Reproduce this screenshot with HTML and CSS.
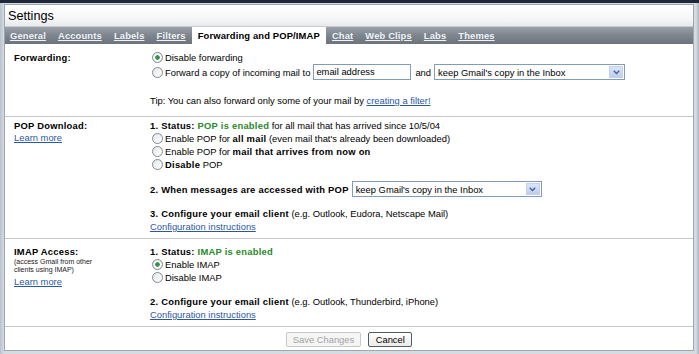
FILE: index.html
```html
<!DOCTYPE html>
<html lang="en">

<head>
    <meta charset="UTF-8">
    <title>Settings</title>
    <link rel="stylesheet" href="styles.css">
</head>

<body>
    <div class="frame">
        <div class="panel">
            <div class="title-bar">Settings</div>

            <div class="tabs">
                <a href="#">General</a>
                <a href="#">Accounts</a>
                <a href="#">Labels</a>
                <a href="#">Filters</a>
                <span class="tab-active">Forwarding and POP/IMAP</span>
                <a href="#">Chat</a>
                <a href="#">Web Clips</a>
                <a href="#">Labs</a>
                <a href="#">Themes</a>
            </div>

            <!-- Forwarding -->
            <div class="section section-fwd">
                <div class="label-col">
                    <div class="label">Forwarding:</div>
                </div>
                <div class="content-col">
                    <label class="opt"><input type="radio" name="fwd" checked><span>Disable forwarding</span></label>
                    <div class="opt opt-inputs">
                        <input type="radio" name="fwd">
                        <span>Forward a copy of incoming mail to</span>
                        <span class="text-box">email address</span>
                        <span class="and">and</span>
                        <span class="select select-fwd">
                            <span class="select-text">keep Gmail's copy in the Inbox</span>
                            <span class="select-btn">
                                <svg width="7" height="5" viewBox="0 0 7 5"><path d="M0.8 0.8 L3.5 3.6 L6.2 0.8" fill="none" stroke="#4d6185" stroke-width="1.4"/></svg>
                            </span>
                        </span>
                    </div>
                    <div class="tip">Tip: You can also forward only some of your mail by <a href="#">creating a filter!</a></div>
                </div>
            </div>

            <!-- POP -->
            <div class="section section-pop">
                <div class="label-col">
                    <div class="label">POP Download:</div>
                    <a href="#" class="learn">Learn more</a>
                </div>
                <div class="content-col">
                    <div class="line line-status"><b>1. Status: <span class="ok">POP is enabled</span></b> for all mail that has arrived since 10/5/04</div>
                    <label class="opt"><input type="radio" name="pop"><span>Enable POP for <b>all mail</b> (even mail that's already been downloaded)</span></label>
                    <label class="opt"><input type="radio" name="pop"><span>Enable POP for <b>mail that arrives from now on</b></span></label>
                    <label class="opt"><input type="radio" name="pop"><span><b>Disable</b> POP</span></label>

                    <div class="opt opt-inputs gap-row">
                        <b>2. When messages are accessed with POP</b>
                        <span class="select select-pop">
                            <span class="select-text">keep Gmail's copy in the Inbox</span>
                            <span class="select-btn">
                                <svg width="7" height="5" viewBox="0 0 7 5"><path d="M0.8 0.8 L3.5 3.6 L6.2 0.8" fill="none" stroke="#4d6185" stroke-width="1.4"/></svg>
                            </span>
                        </span>
                    </div>

                    <div class="line gap-row"><b>3. Configure your email client</b> (e.g. Outlook, Eudora, Netscape Mail)</div>
                    <div class="line"><a href="#">Configuration instructions</a></div>
                </div>
            </div>

            <!-- IMAP -->
            <div class="section section-imap">
                <div class="label-col">
                    <div class="label">IMAP Access:</div>
                    <div class="small-note">(access Gmail from other<br>clients using IMAP)</div>
                    <a href="#" class="learn learn-imap">Learn more</a>
                </div>
                <div class="content-col">
                    <div class="line"><b>1. Status: <span class="ok">IMAP is enabled</span></b></div>
                    <label class="opt"><input type="radio" name="imap" checked><span>Enable IMAP</span></label>
                    <label class="opt"><input type="radio" name="imap"><span>Disable IMAP</span></label>

                    <div class="line gap-row-imap"><b>2. Configure your email client</b> (e.g. Outlook, Thunderbird, iPhone)</div>
                    <div class="line"><a href="#">Configuration instructions</a></div>
                </div>
            </div>

            <div class="actions">
                <button class="btn" disabled>Save Changes</button>
                <button class="btn btn-cancel">Cancel</button>
            </div>
        </div>
    </div>
</body>

</html>
```

FILE: styles.css
```css
body {
    margin: 0;
    background-color: #cdd3d9;
    font-family: "Liberation Sans", Arial, sans-serif;
    font-size: 9.4px;
    color: #000;
}

b {
    letter-spacing: 0.25px;
}

a {
    color: #2b58a3;
}

.frame {
    height: 354px;
    box-sizing: border-box;
    border-top: 3px solid #1e2838;
    padding: 1px 5px 3px 4px;
    background: linear-gradient(to right, #b7c1cc, #d6dbe0 4px, #d6dbe0 calc(100% - 3px), #aab3bd);
}

.panel {
    border: 1px solid #9ea7b1;
    background-color: #fff;
}

.title-bar {
    height: 22px;
    line-height: 22px;
    padding-left: 3px;
    font-size: 12.7px;
    background: linear-gradient(#ffffff, #f4f5f6 70%, #e6e8ea);
    border-bottom: 1px solid #c9cdd1;
    box-sizing: border-box;
}

.tabs {
    height: 17px;
    display: flex;
    align-items: stretch;
    background: linear-gradient(#9ba1a9, #80878f 45%, #6c737c);
    font-weight: bold;
    letter-spacing: 0.15px;
}

.tabs a,
.tabs .tab-active {
    display: flex;
    align-items: center;
    padding: 0 6px;
    line-height: 17px;
}

.tabs a {
    color: #eef2f6;
}

.tabs a:first-child {
    padding-left: 5px;
}

.tabs .tab-active {
    background-color: #fff;
    color: #000;
}

.section {
    display: grid;
    grid-template-columns: 136px 1fr;
    padding-left: 9px;
    border-bottom: 1px solid #c4c8cc;
}

.section-fwd {
    padding-top: 7px;
    padding-bottom: 9px;
}

.section-pop {
    padding-top: 3px;
    padding-bottom: 5px;
}

.section-imap {
    padding-top: 6px;
    padding-bottom: 5px;
}

.label {
    font-weight: bold;
    letter-spacing: 0.25px;
    line-height: 13px;
}

.section-pop .label,
.section-pop .learn {
    line-height: 12px;
}

.learn {
    display: block;
    line-height: 13px;
    width: max-content;
}

.small-note {
    font-size: 7px;
    line-height: 8px;
    color: #222;
}

.learn-imap {
    margin-top: 1px;
}

.line {
    height: 13px;
    line-height: 13px;
    white-space: nowrap;
}

.opt {
    display: flex;
    align-items: center;
    height: 13px;
    white-space: nowrap;
}

.line-status {
    height: 12px;
    line-height: 12px;
}

.opt-inputs {
    height: 16px;
}

.gap-row {
    margin-top: 10px;
}

.gap-row-imap {
    margin-top: 11px;
}

.tip {
    margin-top: 14px;
    line-height: 13px;
}

.ok {
    color: #2a8a2a;
}

input[type="radio"] {
    appearance: none;
    width: 11px;
    height: 11px;
    margin: 0 2px;
    border: 1px solid #7d8a97;
    border-radius: 50%;
    box-sizing: border-box;
    background: linear-gradient(135deg, #e4e6e8, #ffffff);
    flex-shrink: 0;
}

input[type="radio"]:checked {
    background: radial-gradient(circle, #2f8a46 0, #3d9b52 2px, #ffffff 2.6px, #f4f5f6 4px, #e2e4e6 5px);
}

.text-box {
    display: inline-block;
    width: 98px;
    height: 16px;
    line-height: 14px;
    box-sizing: border-box;
    border: 1px solid #7f9db9;
    padding-left: 2px;
    margin-left: 3px;
}

.and {
    margin: 0 3px 0 4px;
}

.select {
    display: inline-flex;
    align-items: center;
    height: 16px;
    box-sizing: border-box;
    border: 1px solid #7f9db9;
    padding: 1px;
}

.select-fwd {
    width: 191px;
}

.select-pop {
    width: 190px;
    margin-left: 3px;
}

.select-text {
    flex: 1;
    padding-left: 2px;
}

.select-btn {
    width: 14px;
    height: 12px;
    display: flex;
    align-items: center;
    justify-content: center;
    background: linear-gradient(#dbe5fb, #bccdf5);
    border: 1px solid #c3d0ef;
    box-sizing: border-box;
}

.actions {
    height: 23px;
    display: flex;
    justify-content: center;
    align-items: flex-start;
    gap: 7px;
    padding-top: 5px;
    box-sizing: border-box;
}

.btn {
    height: 15px;
    padding: 0 6px;
    font-family: "Liberation Sans", Arial, sans-serif;
    font-size: 9.4px;
    border-radius: 2px;
    border: 1px solid #c8c8c8;
    background: #f5f5f4;
    color: #a3a3a3;
}

.btn-cancel {
    width: 44px;
    border: 1px solid #4e5d6e;
    background: linear-gradient(#ffffff, #ecebe6);
    color: #000;
}
```
